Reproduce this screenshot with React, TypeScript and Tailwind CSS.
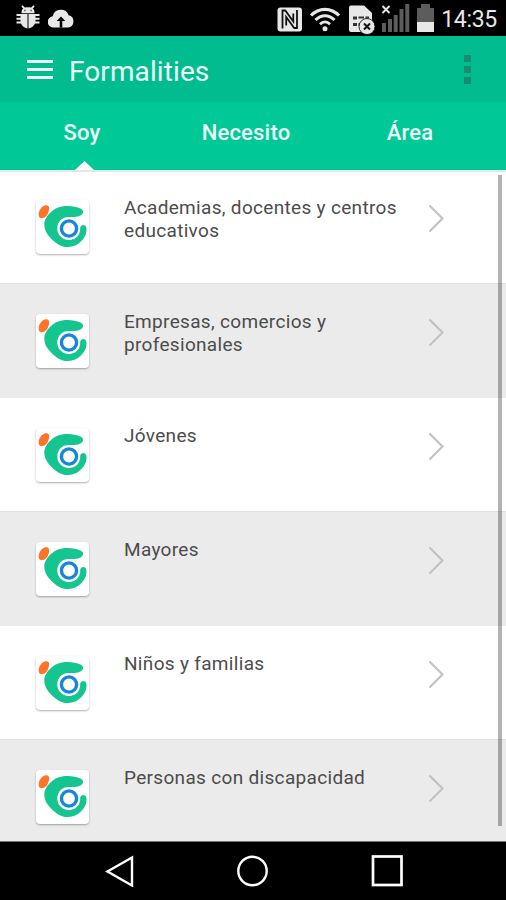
import { useState } from "react";
import clsx from "clsx";

const tabs = [
  { id: "soy", label: "Soy", className: "w-[168px] pr-1" },
  { id: "necesito", label: "Necesito", className: "w-[156px]" },
  { id: "area", label: "Área", className: "w-[172px]" },
];

const items = [
  "Academias, docentes y centros educativos",
  "Empresas, comercios y profesionales",
  "Jóvenes",
  "Mayores",
  "Niños y familias",
  "Personas con discapacidad",
];

function StatusBar() {
  return (
    <div className="flex h-9 shrink-0 items-start bg-black text-[#e8e8e8]">
      {/* Debug and upload notifications */}
      <svg className="ml-4 mt-[5px]" width="24" height="25" viewBox="0 0 24 25" fill="currentColor">
        <path d="M6 .8 9 4.2M18 .8l-3 3.4M.5 10h5M.5 13.8h5M.5 17.500h5M18.500 10h5M18.500 13.800h5M18.500 17.500h5" stroke="currentColor" strokeWidth="1.9" />
        <path d="M5.500 8.200c0-4.700 2.500-5.900 6.500-5.900s6.500 1.200 6.500 5.900Z" />
        <path d="M4.500 8.900h7v14.600C7.500 22.800 4.500 19.500 4.500 16ZM12.500 8.900h7V16c0 3.500-3 6.800-7 7.500Z" />
        <path d="M8.300 5.500h1.200M14.500 5.500h1.200" stroke="#333" strokeWidth="1.300" />
      </svg>
      <svg className="ml-2 mt-[9px]" width="26" height="19" viewBox="0 0 26 19">
        <path d="M6 18.500A5.600 5.600 0 0 1 4.700 7.300 8.300 8.300 0 0 1 20.600 6.300 6.200 6.200 0 0 1 20 18.500Z" fill="currentColor" />
        <path d="M13 18.500V11" stroke="#000" strokeWidth="2.600" />
        <path d="m8.700 12 4.300-4.500 4.300 4.500Z" fill="#000" />
      </svg>

      <div className="flex-1" />

      {/* NFC */}
      <svg className="mt-[7px]" width="26" height="25" viewBox="0 0 26 25">
        <rect x=".5" y=".5" width="24.500" height="24" rx="3" fill="currentColor" />
        <path d="M5.500 21.500V3.500h2.800l8 11V6.500" fill="none" stroke="#111" strokeWidth="1.800" />
        <path d="M20 3v18h-2.800l-8-11v8.500" fill="none" stroke="#111" strokeWidth="1.800" />
      </svg>
      <svg className="ml-[6px] mt-[7px]" width="32" height="25" viewBox="0 0 32 25" fill="none" stroke="currentColor">
        <path d="M2 8.500c8-8.300 20-8.300 28 0" strokeWidth="3.200" />
        <path d="M6.500 13c5.500-5.700 13.500-5.700 19 0" strokeWidth="3" />
        <path d="M11 17.300c3-3.200 7-3.200 10 0" strokeWidth="2.800" />
        <circle cx="16" cy="21.800" r="2.500" fill="currentColor" stroke="none" />
      </svg>
      {/* SIM card missing */}
      <svg className="ml-[7px] mt-[4px]" width="28" height="31" viewBox="0 0 28 31">
        <path d="M1 3.500Q1 1.500 3 1.500h13L24 9v19H3q-2 0-2-2Z" fill="currentColor" />
        <path d="M5 12.500h4v3H5Zm0 6.500h4v3H5Zm5.500-6.500H16v2h-5.500Zm7 0H21v2h-3.500ZM10.500 19h3v3h-3Z" fill="#333" />
        <circle cx="19" cy="22.500" r="8" fill="currentColor" stroke="#000" strokeWidth=".8" />
        <path d="m16 19.500 6 6m0-6-6 6" stroke="#111" strokeWidth="2" />
      </svg>
      <svg className="ml-[5px] mt-[3px]" width="30" height="29" viewBox="0 0 30 29">
        <path d="M1 20h4v9H1Zm6-4h4v13H7Zm5.700-4h4v17h-4Zm5.800-6h4v23h-4ZM24.300 1h4v28h-4Z" fill="#5c5c5c" />
        <path d="m1.500 3 7 7m0-7-7 7" stroke="currentColor" strokeWidth="1.900" />
      </svg>
      <svg className="ml-[5px] mt-[4px]" width="19" height="28" viewBox="0 0 19 28">
        <path d="M5 0h9v4h4v24H1V4h4Z" fill="#5c5c5c" />
        <path d="M1 18h17v10H1Z" fill="currentColor" />
      </svg>
      <span className="ml-[6px] mr-[9px] mt-[6px] text-[23px] leading-[27px] tracking-[-0.3px]">14:35</span>
    </div>
  );
}

function AppLogo() {
  return (
    <svg width="53" height="54" viewBox="0 0 53 54">
      <path d="M2.700 15.500C2.200 11 5.500 6 9.500 5.300c2.700-.4 4 1 3.600 4-.5 4.200-2.600 8.200-6.300 8.800-2.600.3-3.800-.6-4.100-2.600Z" fill="#ff7429" />
      <path d="M44.500 8.400C36 4.800 23 4.500 15.500 11.500 11 15.500 8.300 19.500 8.300 24.500c0 8.500 6.500 14.500 13.200 19.500 6.500 4.500 15.500 4.100 22-1.200C49 38.300 51 33 50.400 28c-.5-3.900-5.400-4.200-6.200-.4C44.700 35 40 40 33 40 26 40 21.300 34.800 21.300 28.500c0-7.500 5.700-12 12.200-11.500 3.500.2 7 .2 10.500-1.300 3.700-1.500 4.200-5.700.5-7.300Z" fill="#14c58f" />
      <circle cx="33" cy="28.500" r="7.600" fill="white" stroke="#1686dc" strokeWidth="3.400" />
    </svg>
  );
}

function ListRow({ label, shaded }: { label: string; shaded: boolean }) {
  return (
    <li
      className={clsx(
        "flex shrink-0 items-start pl-9",
        shaded ? "h-[115px] border-t border-[#dfdfdf] bg-[#ebebeb]" : "h-[113px] bg-white"
      )}
    >
      <div className="mt-[30px] h-[54px] w-[53px] shrink-0 rounded-[4px] bg-white shadow-[0_1px_2px_rgba(0,0,0,0.32)]">
        <AppLogo />
      </div>
      <p className="ml-[35px] mt-[26px] w-[290px] text-[19px] leading-[23px] tracking-[0.32px] text-[#4c4c4c]">{label}</p>
      <svg className="ml-[14px] mt-[34px] shrink-0" width="16" height="29" viewBox="0 0 16 29" fill="none" stroke="#c2c2c2" strokeWidth="2.200">
        <path d="m1.500 1.500 13 13-13 13" />
      </svg>
    </li>
  );
}

export default function App() {
  const [activeTab, setActiveTab] = useState("soy");

  return (
    <div className="flex h-[900px] w-[506px] flex-col overflow-hidden bg-white font-[Roboto,sans-serif]">
      <StatusBar />

      <header className="flex h-[66px] shrink-0 items-center bg-[#00bc8e] text-[#ecfff9]">
        <button className="ml-[27px] flex w-[26px] flex-col gap-[5px]" aria-label="Menu">
          <span className="h-[3px] w-full bg-current" />
          <span className="h-[3px] w-full bg-current" />
          <span className="h-[3px] w-full bg-current" />
        </button>
        <h1 className="ml-[16px] mt-[5px] text-[28px] leading-8 tracking-[0.1px]">Formalities</h1>
        <button className="ml-auto mr-[35px] flex flex-col gap-[4px]" aria-label="More options">
          <span className="size-[7px] bg-[#188b70]" />
          <span className="size-[7px] bg-[#188b70]" />
          <span className="size-[7px] bg-[#188b70]" />
        </button>
      </header>

      <nav className="flex h-[68px] shrink-0 bg-[#00c896] text-[#ecfff9]">
        {tabs.map((tab) => (
          <button
            key={tab.id}
            onClick={() => setActiveTab(tab.id)}
            className={clsx("relative pb-[7px] text-[22px] font-medium tracking-[0.2px]", tab.className)}
          >
            {tab.label}
            {activeTab === tab.id && (
              <svg className="absolute bottom-0 left-[75px]" width="19" height="9" viewBox="0 0 19 9">
                <path d="M0 9 9.500 0 19 9Z" fill="white" />
              </svg>
            )}
          </button>
        ))}
      </nav>

      <main className="relative min-h-0 flex-1 overflow-hidden">
        <ul className="flex flex-col">
          {items.map((label, index) => (
            <ListRow key={label} label={label} shaded={index % 2 === 1} />
          ))}
        </ul>
        <div className="absolute inset-x-0 top-0 h-[2px] bg-[#e8e8e3]" />
        {/* Scroll thumb */}
        <div className="absolute right-[4px] top-[5px] h-[651px] w-[4px] bg-black/30" />
      </main>

      <footer className="flex h-[59px] shrink-0 items-start border-t border-[#777] bg-black">
        <svg className="ml-[105px] mt-[13px]" width="30" height="32" viewBox="0 0 30 32" fill="none" stroke="white" strokeWidth="2.400">
          <path d="M27 2.500v28L2.500 16.500Z" />
        </svg>
        <svg className="ml-[101px] mt-[13px]" width="33" height="33" viewBox="0 0 33 33" fill="none" stroke="white" strokeWidth="2.400">
          <circle cx="16.500" cy="16" r="14.200" />
        </svg>
        <svg className="ml-[102px] mt-[13px]" width="33" height="33" viewBox="0 0 33 33" fill="none" stroke="white" strokeWidth="2.700">
          <rect x="2" y="1.500" width="28.500" height="28.500" />
        </svg>
      </footer>
    </div>
  );
}
